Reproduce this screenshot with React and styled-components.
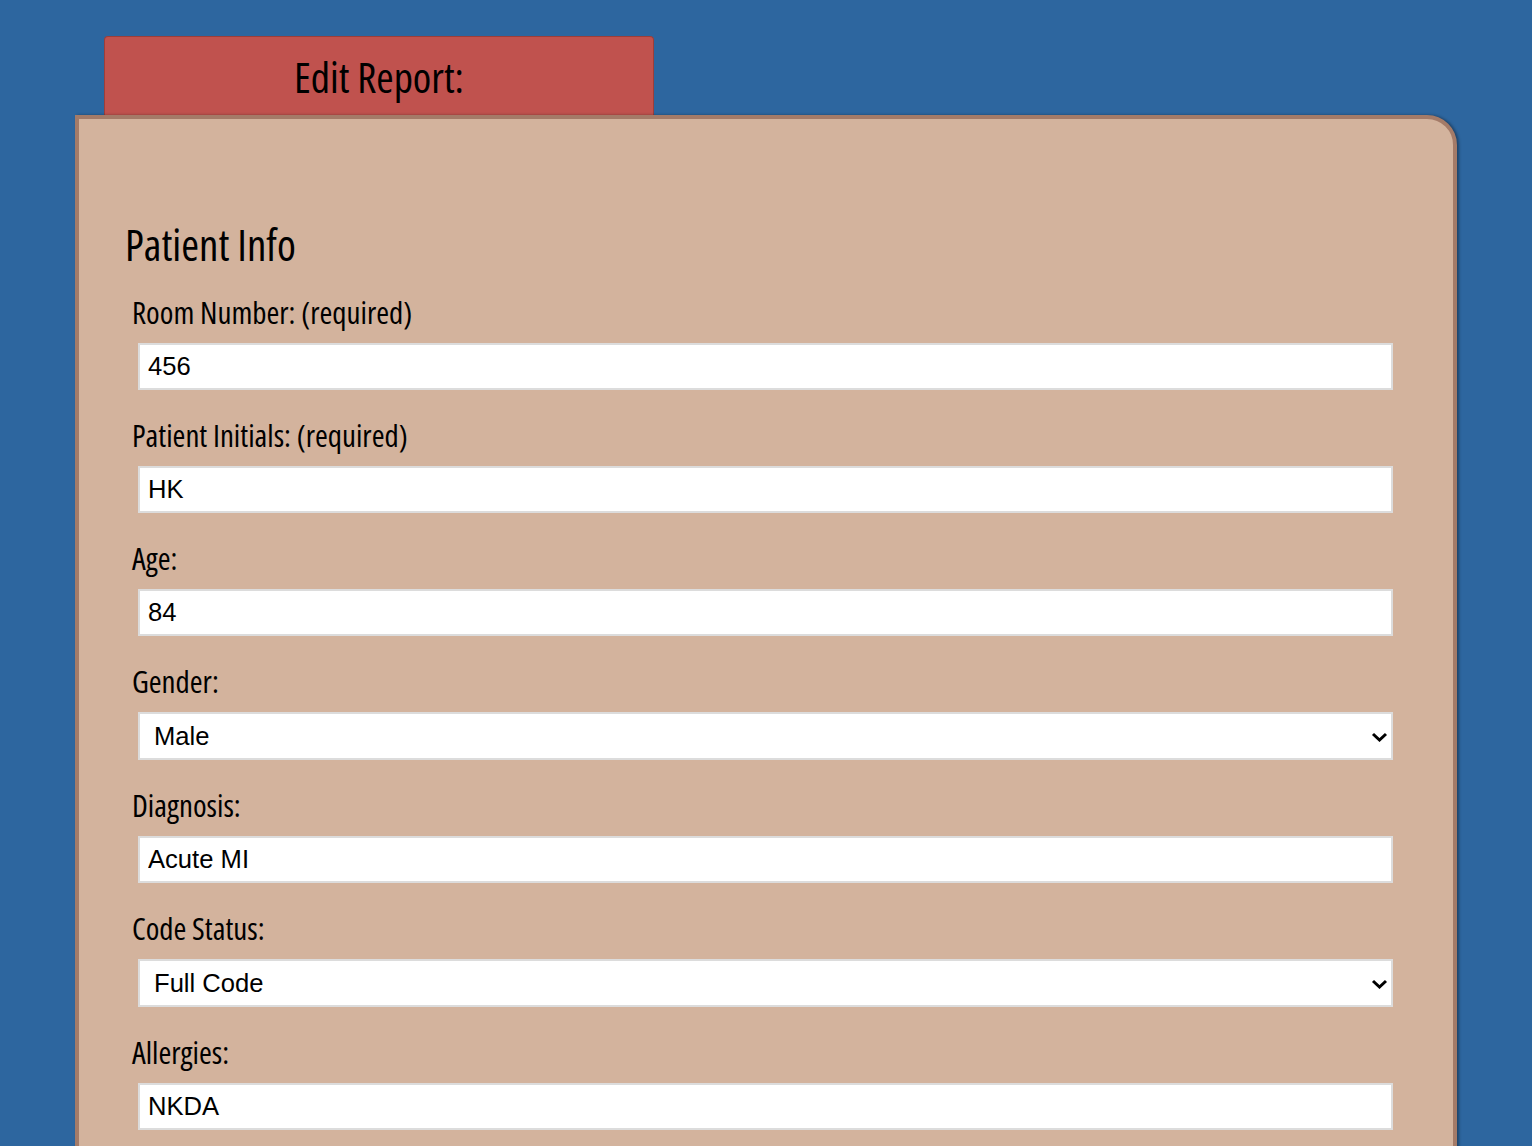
import React from 'react';
import styled, { createGlobalStyle } from 'styled-components';

const GlobalStyle = createGlobalStyle`
  html, body {
    margin: 0;
    padding: 0;
    background: #2D669F;
  }
`

const Page = styled.div`
  padding: 36px 75px 0 75px;
  font-family: "Open Sans", sans-serif;
  font-stretch: 75%;
  height: 1110px;
  overflow: hidden;
`

const Tab = styled.div`
  margin-left: 29px;
  width: 548px;
  height: 78px;
  background: #C0524E;
  border: 1px solid #9C3E3A;
  border-bottom: none;
  border-radius: 4px 4px 0 0;
  display: flex;
  justify-content: center;
  align-items: center;
`

const TabTitle = styled.h1`
  margin: 0;
  font-size: 42px;
  font-weight: 500;
  color: #000;
`

const Card = styled.div`
  background: #D3B39D;
  border: 4px solid #A47B68;
  border-top-right-radius: 30px;
  box-shadow: 2px 0 3px rgba(0, 0, 0, 0.35);
  padding: 100px 60px 40px 46px;
  min-height: 1100px;
`

const SectionTitle = styled.h2`
  margin: 0 0 20px;
  font-size: 43px;
  font-weight: 500;
  line-height: 1.2;
  color: #000;
`

const Field = styled.div`
  display: flex;
  flex-direction: column;
  padding-left: 7px;
  margin-bottom: 24px;
`

const Label = styled.label`
  font-size: 31px;
  font-weight: 500;
  line-height: 42px;
  color: #000;
  margin-bottom: 10px;
`

const boxStyles = `
  box-sizing: border-box;
  width: 100%;
  border: 2px solid #DCDCDC;
  background: #fff;
  font-family: "Liberation Sans", Arial, sans-serif;
  font-stretch: normal;
  font-size: 25.6px;
  color: #000;
  outline: none;
`

const TextInput = styled.input`
  ${boxStyles}
  margin-left: 6px;
  width: calc(100% - 6px);
  height: 47px;
  padding: 0 8px;
`

const SelectWrap = styled.div`
  position: relative;
  margin-left: 6px;
`

const Select = styled.select`
  ${boxStyles}
  appearance: none;
  height: 48px;
  padding: 0 40px 0 14px;
`

const Chevron = styled.svg`
  position: absolute;
  right: 5px;
  top: 50%;
  width: 17px;
  height: 10px;
  margin-top: -4px;
  pointer-events: none;
`

const fields = [
  { label: 'Room Number: (required)', value: '456' },
  { label: 'Patient Initials: (required)', value: 'HK' },
  { label: 'Age:', value: '84' },
  { label: 'Gender:', value: 'Male', options: ['Male', 'Female', 'Other'] },
  { label: 'Diagnosis:', value: 'Acute MI' },
  { label: 'Code Status:', value: 'Full Code', options: ['Full Code', 'DNR', 'DNI'] },
  { label: 'Allergies:', value: 'NKDA' },
]

export default function App() {
  return (
    <>
      <GlobalStyle />
      <Page>
        <Tab>
          <TabTitle>Edit Report:</TabTitle>
        </Tab>
        <Card>
          <SectionTitle>Patient Info</SectionTitle>
          {fields.map(f => (
            <Field key={f.label}>
              <Label>{f.label}</Label>
              {f.options ? (
                <SelectWrap>
                  <Select defaultValue={f.value}>
                    {f.options.map(o => <option key={o}>{o}</option>)}
                  </Select>
                  <Chevron viewBox="0 0 17 10">
                    <path d="M2 2 L8.5 8 L15 2" fill="none" stroke="#000" strokeWidth="3" />
                  </Chevron>
                </SelectWrap>
              ) : (
                <TextInput type="text" defaultValue={f.value} />
              )}
            </Field>
          ))}
        </Card>
      </Page>
    </>
  )
}
